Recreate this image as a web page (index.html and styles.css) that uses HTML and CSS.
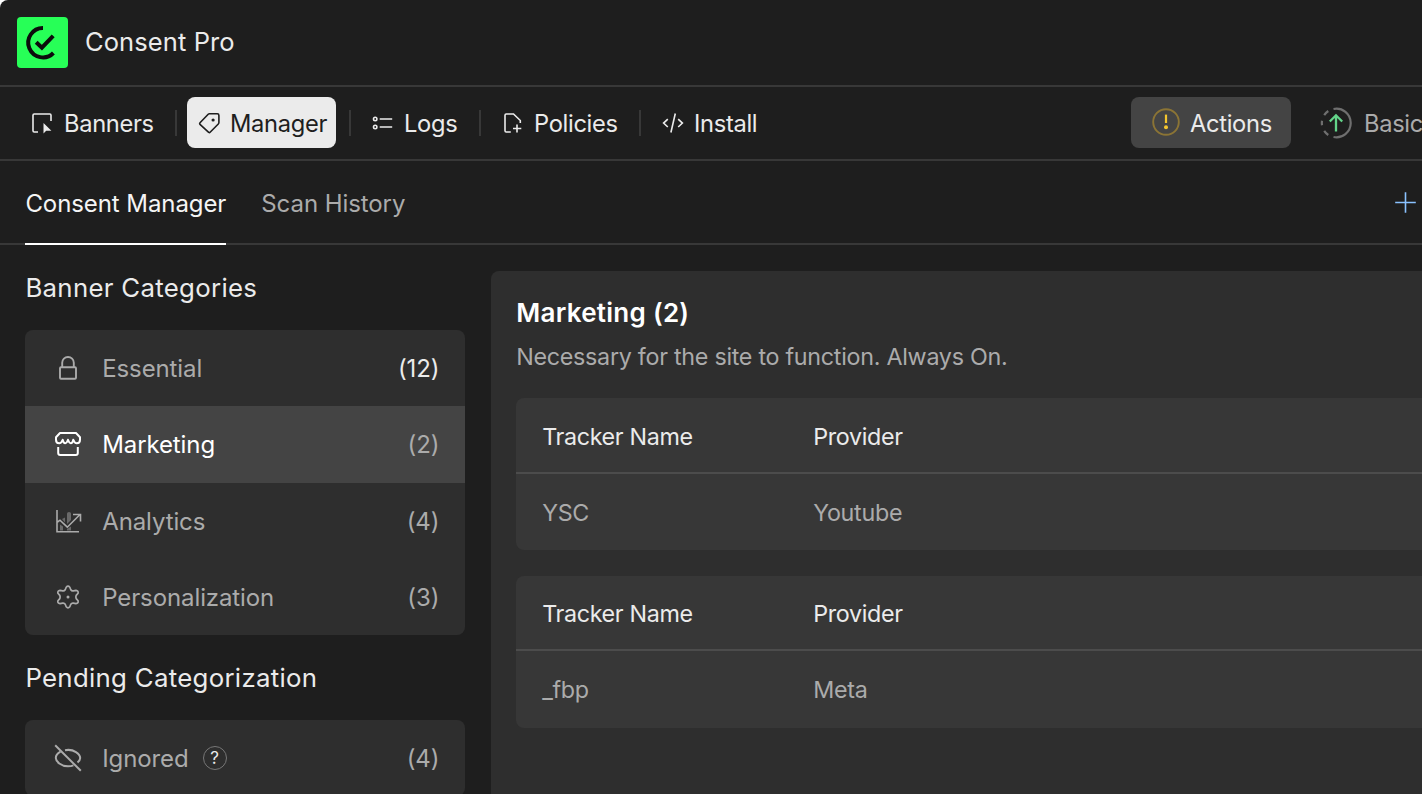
FILE: index.html
```html
<!DOCTYPE html>
<html lang="en">
<head>
    <meta charset="UTF-8">
    <meta name="viewport" content="width=device-width, initial-scale=1.0">
    <title>Consent Pro</title>
    <link rel="stylesheet" href="styles.css">
</head>
<body>

<div class="app">
    <header class="topbar">
        <svg class="logo" width="51" height="51" viewBox="0 0 51 51" fill="none" stroke="#0c0c0c" stroke-width="4">
            <rect width="51" height="51" rx="4" fill="#27ff57" stroke="none"/>
            <path d="M26 11A14.7 14.7 0 1 0 36.4 36"/>
            <path d="M19.2 25.2L24.9 30.7L36.2 18.8"/>
        </svg>
        <span class="brand">Consent Pro</span>
    </header>

    <nav class="nav">
        <a class="nav-item nav-banners">
            <svg width="22" height="22" viewBox="0 0 22 22" fill="none" stroke="currentColor" stroke-width="1.6">
                <path d="M7 20H3.2A1.2 1.2 0 0 1 2 18.8V3.2A1.2 1.2 0 0 1 3.2 2H18.8A1.2 1.2 0 0 1 20 3.2V9"/>
                <path d="M12.5 11V21.6L15.2 18.8H20.4Z" fill="currentColor" stroke="none"/>
            </svg>
            <span>Banners</span>
        </a>
        <i class="sep"></i>
        <a class="nav-item nav-manager active">
            <svg width="22" height="22" viewBox="-.5 0 22 22" fill="none" stroke="currentColor" stroke-width="1.6" stroke-linejoin="round">
                <path d="M10.9 1.8H18.8A1.6 1.6 0 0 1 20.4 3.4V10.5A2 2 0 0 1 19.8 12L11.6 20.3A1 1 0 0 1 10.2 20.3L1.5 12.3A1 1 0 0 1 1.5 10.8L9.7 2.3A1.7 1.7 0 0 1 10.9 1.8Z"/>
                <circle cx="14.6" cy="8" r="1.6" fill="currentColor" stroke="none"/>
            </svg>
            <span>Manager</span>
        </a>
        <i class="sep"></i>
        <a class="nav-item nav-logs">
            <svg width="22" height="22" viewBox="-.7 0 22 22" fill="none" stroke="currentColor" stroke-width="1.6">
                <circle cx="3.5" cy="7" r="1.7"/>
                <circle cx="3.5" cy="15" r="1.7"/>
                <path d="M8 7H20.5M8 15H20.5"/>
            </svg>
            <span>Logs</span>
        </a>
        <i class="sep"></i>
        <a class="nav-item nav-policies">
            <svg width="22" height="22" viewBox="-1 0 22 22" fill="none" stroke="currentColor" stroke-width="1.6">
                <path d="M8.8 20H4.2A1.2 1.2 0 0 1 3 18.8V3.2A1.2 1.2 0 0 1 4.2 2H11.5L18.3 8.5V11"/>
                <path d="M15 12.5V20.5M11 16.5H19.3"/>
            </svg>
            <span>Policies</span>
        </a>
        <i class="sep"></i>
        <a class="nav-item nav-install">
            <svg width="22" height="22" viewBox="0 0 22 22" fill="none" stroke="currentColor" stroke-width="1.6">
                <path d="M5.8 7.2L1.6 11.1L5.8 15M16.2 7.2L20.4 11.1L16.2 15M13.3 1.5L8.9 20.5"/>
            </svg>
            <span>Install</span>
        </a>

        <div class="nav-right">
            <a class="actions">
                <svg width="28" height="28" viewBox="0 0 28 28" fill="none">
                    <circle cx="14" cy="14" r="12.8" stroke="#8b7435" stroke-width="1.9"/>
                    <path d="M14 6.6V15" stroke="#f3c52e" stroke-width="2.2"/>
                    <circle cx="14" cy="19.3" r="2" fill="#f3c52e"/>
                </svg>
                <span>Actions</span>
            </a>
            <a class="plan">
                <svg width="32" height="32" viewBox="0 0 32 32" fill="none" stroke="#6f6f6f" stroke-width="2.2">
                    <path d="M13.5 2A14.3 14.3 0 1 1 13.5 30"/>
                    <path d="M8.3 4A14.3 14.3 0 0 0 4.2 8.2M2 13.7A14.3 14.3 0 0 0 2 18.3M4.2 23.8A14.3 14.3 0 0 0 8.3 28"/>
                    <path d="M16 24.5V8.5M9.8 14.5L16 8.3L22.2 14.5" stroke="#63d489" stroke-width="2.3"/>
                </svg>
                <span>Basic</span>
            </a>
        </div>
    </nav>

    <div class="tabs">
        <a class="tab selected">Consent Manager</a>
        <a class="tab">Scan History</a>
        <svg class="add" width="22" height="22" viewBox="0 0 22 22" stroke="#8ac2ff" stroke-width="1.6">
            <path d="M10.5 .2V20.8M.2 10.5H20.8"/>
        </svg>
    </div>

    <div class="content">
        <aside class="sidebar">
            <h2>Banner Categories</h2>
            <div class="list">
                <div class="row essential">
                    <svg width="28" height="28" viewBox="0 0 28 28" fill="none" stroke="currentColor" stroke-width="1.9">
                        <rect x="6" y="13.2" width="16" height="11.6" rx="1"/>
                        <path d="M8.2 13V8.8A5.8 5.8 0 0 1 19.8 8.8V13"/>
                    </svg>
                    <span>Essential</span>
                    <span class="count">(12)</span>
                </div>
                <div class="row current">
                    <svg width="28" height="28" viewBox="0 0 28 28" fill="none" stroke="currentColor" stroke-width="2" stroke-linejoin="round">
                        <path d="M6 3H22L26 7.3V9.7C26 12 24.6 13.2 22.8 13.2C20.8 13.2 20 11.6 19.3 9.8C18.8 12 18 13.2 16.8 13.2C15.5 13.2 14.6 11.6 14 9.8C13.4 11.6 12.5 13.2 11.2 13.2C10 13.2 9.2 12 8.7 9.8C8 11.6 7.2 13.2 5.2 13.2C3.4 13.2 2 12 2 9.7V7.3Z"/>
                        <path d="M4.2 17V23A2 2 0 0 0 6.2 25H21.8A2 2 0 0 0 23.8 23V17"/>
                    </svg>
                    <span>Marketing</span>
                    <span class="count">(2)</span>
                </div>
                <div class="row">
                    <svg width="28" height="28" viewBox="0 0 28 28" fill="none" stroke="currentColor" stroke-width="1.6">
                        <path d="M6 17.5L9 19.5V23.5H6ZM8 12L11 10.5V15.5ZM13 22L17 19.5V23.5H13ZM13 6.5Q13 5 15 5T17 6.5V13L13 17Z" fill="#696969" stroke="none"/>
                        <path d="M3 3V24.7H25M3.5 15L6 13.2L13.3 20.2L26 7.5M19 7.5H26.5V14.5"/>
                    </svg>
                    <span>Analytics</span>
                    <span class="count">(4)</span>
                </div>
                <div class="row">
                    <svg width="28" height="28" viewBox="0 0 28 28" fill="none" stroke="currentColor" stroke-width="1.7" stroke-linejoin="round">
                        <path d="M12.2 4.2Q14 2.2 15.8 4.2L16.8 6.8Q17.7 8.2 19.3 7.9L22 7.3Q24.600 7.6 24.1 10.2L22.200 12.4Q21.5 14 22.200 15.6L24.1 17.8Q24.600 20.400 22 20.7L19.3 20.1Q17.7 19.8 16.8 21.200L15.8 23.8Q14 25.800 12.2 23.8L11.200 21.200Q10.300 19.8 8.700 20.1L6 20.700Q3.400 20.400 3.900 17.8L5.800 15.600Q6.500 14 5.800 12.400L3.900 10.200Q3.400 7.600 6 7.300L8.700 7.900Q10.300 8.200 11.200 6.800Z"/>
                        <circle cx="14" cy="14" r="1.5" fill="currentColor" stroke="none"/>
                    </svg>
                    <span>Personalization</span>
                    <span class="count">(3)</span>
                </div>
            </div>

            <h2>Pending Categorization</h2>
            <div class="list">
                <div class="row">
                    <svg width="28" height="28" viewBox="0 0 28 28" fill="none" stroke="currentColor" stroke-width="2">
                        <path d="M1.2 1.3L26.8 26.8"/>
                        <path d="M6.5 7.6C3.8 9 1.8 12 1.8 14C1.8 17.5 7 22.3 14 22.3C16 22.3 17.8 22 19.4 21.3M11 6.2C20 4.5 26.2 10.3 26.2 14C26.2 15.8 25 17.3 23.5 18.6"/>
                    </svg>
                    <span>Ignored</span>
                    <span class="help">?</span>
                    <span class="count">(4)</span>
                </div>
            </div>
        </aside>

        <main class="panel">
            <h1>Marketing (2)</h1>
            <p>Necessary for the site to function. Always On.</p>
            <div class="table">
                <div class="table-row table-head"><span>Tracker Name</span><span>Provider</span></div>
                <div class="table-row"><span>YSC</span><span>Youtube</span></div>
            </div>
            <div class="table">
                <div class="table-row table-head"><span>Tracker Name</span><span>Provider</span></div>
                <div class="table-row"><span>_fbp</span><span>Meta</span></div>
            </div>
        </main>
    </div>
</div>

</body>
</html>
```
FILE: styles.css
```css
* { box-sizing: border-box; }
body { margin: 0; background: white; font-family: Inter, "Liberation Sans", sans-serif; font-size: 24px; line-height: 32px; color: #ebebeb; overflow: hidden; }
svg { flex: none; display: block; }

.app { height: 794px; background: #1e1e1e; border-top-left-radius: 8px; overflow: hidden; display: flex; flex-direction: column; }

.topbar { flex: none; height: 87px; display: flex; align-items: center; gap: 17px; padding: 0 17px 1px; border-bottom: 2px solid #383838; }
.brand { font-size: 25.5px; letter-spacing: 0.1px; }

.nav { flex: none; height: 74px; display: flex; align-items: center; border-bottom: 2px solid #383838; white-space: nowrap; font-size: 23.7px; letter-spacing: -0.32px; padding-bottom: 1px; }
.nav-item { display: flex; align-items: center; gap: 11px; height: 51px; }
.nav span { padding-top: 2px; }
.nav-banners { width: 144px; margin-left: 31px; }
.nav-manager { width: 149px; margin: 0 13px 0 10px; padding-left: 11px; }
.nav-manager.nav-item { gap: 10px; }
.nav-logs { width: 108px; margin-left: 20px; }
.nav-policies { width: 138px; margin-left: 20px; }
.nav-install { width: 98px; margin-left: 21px; }
.nav-install.nav-item { gap: 10px; }
.nav-item.active { background: #ebebeb; color: #1e1e1e; border-radius: 8px; }
.sep { width: 2px; height: 26px; background: #383838; }

.nav-right { margin-left: auto; display: flex; align-items: center; }
.actions { display: flex; align-items: center; width: 160px; height: 51px; gap: 10px; padding-left: 21px; background: #444; border-radius: 8px; }
.actions svg { margin-bottom: 2px; }
.plan { display: flex; align-items: center; width: 102px; gap: 12px; margin-left: 29px; color: #ababab; }

.tabs { flex: none; height: 84px; display: flex; gap: 35px; padding-left: 25.4px; letter-spacing: -0.08px; border-bottom: 2px solid #383838; }
.tab { height: 84px; padding-top: 27px; color: #ababab; }
.tab.selected { color: #f5f5f5; border-bottom: 2px solid white; }
.add { margin: 31px 5px 0 auto; }

.content { flex: 1; display: flex; gap: 25.4px; padding-left: 25.4px; }
.sidebar { flex: none; width: 440px; padding-top: 27px; }
h2 { margin: 0 0 26px; font-size: 25.8px; line-height: 32px; font-weight: 400; letter-spacing: 0.3px; }
.list { background: #2e2e2e; border-radius: 8px; overflow: hidden; margin-bottom: 27px; }
.row { display: flex; align-items: center; height: 76.3px; padding: 0 26px 0 28.6px; color: #ababab; letter-spacing: -0.1px; }
.row span { padding-top: 2px; }
.row svg { margin-right: 20.2px; }
.row.current { background: #444; color: #fff; }
.count { margin-left: auto; color: #ababab; }
.essential .count { color: #ebebeb; }
.row .help { width: 24px; height: 24px; border: 1.5px solid #777; border-radius: 50%; margin-left: 14px; padding: 0; font-size: 17px; line-height: 22px; text-align: center; color: #ebebeb; }

.panel { flex: 1; margin-top: 26px; padding: 26px 0 0 25.4px; background: #2e2e2e; border-top-left-radius: 8px; font-size: 23.3px; letter-spacing: -0.28px; }
h1 { margin: 0; font-size: 26px; line-height: 32px; font-weight: 600; letter-spacing: 0.28px; color: #fff; }
p { margin: 12px 0 25.4px; color: #ababab; }
.table { background: #373737; border-radius: 8px 0 0 8px; margin-bottom: 25.4px; }
.table-row { display: grid; grid-template-columns: 271px 1fr; align-items: center; height: 76.3px; padding: 1px 0 0 26px; color: #ababab; }
.table-head { height: 75.6px; padding-top: 3px; letter-spacing: -0.34px; color: #ebebeb; border-bottom: 2px solid #4c4c4c; }
```
